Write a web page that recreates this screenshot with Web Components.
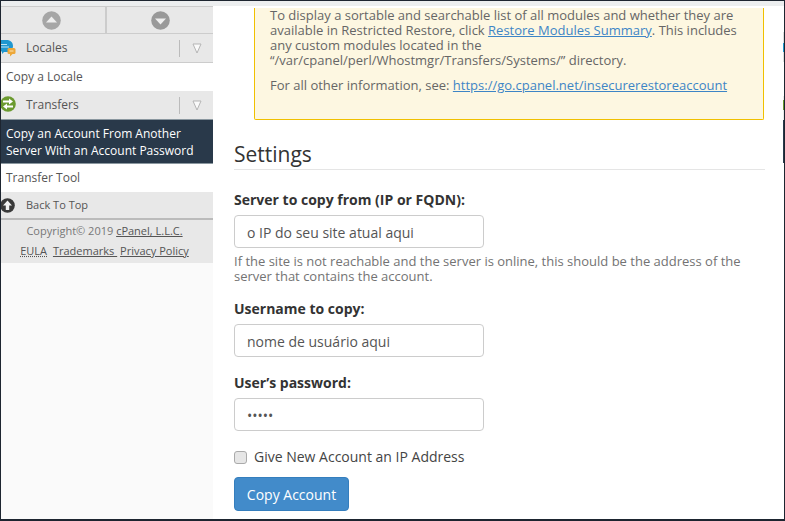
<!DOCTYPE html>
<html>
<head>
<meta charset="utf-8">
<style>
  html, body { margin: 0; padding: 0; height: 100%; overflow: hidden; background: #fff; }
  body { font-family: "Open Sans", sans-serif; }
</style>
</head>
<body>
<whm-page>
  <whm-sidebar slot="side"></whm-sidebar>
  <whm-notice>
    <p>To display a sortable and searchable list of all modules and whether they are available in Restricted Restore, click <a href="#">Restore Modules Summary</a>. This includes any custom modules located in the “/var/cpanel/perl/Whostmgr/Transfers/Systems/” directory.</p>
    <p>For all other information, see: <a href="#">https://go.cpanel.net/insecurerestoreaccount</a></p>
  </whm-notice>
  <settings-form></settings-form>
</whm-page>
<script>
class WhmPage extends HTMLElement {
  constructor () {
    super();
    this.attachShadow({mode: 'open'}).innerHTML = `
      <style>
        :host { display: flex; flex-direction: column; width: 785px; height: 521px; overflow: hidden; box-sizing: border-box; border: 1px solid #1d2530; border-width: 1px 1px 2px 1px; }
        .top { height: 5px; background: #eceeef; flex: none; }
        .body { display: flex; flex: 1; min-height: 0; }
        .side { width: 212px; flex: none; background: #fafafa; }
        .main { flex: 1; min-width: 0; padding: 0 18px 0 21px; background: #fff; }
        /* sliver of the sidebar of the window behind */
        .sliver { width: 1px; flex: none; background: linear-gradient(#fff 26px, #ddd 26px, #ddd 37px, #1f97cf 37px, #1f97cf 46px, #ddd 46px, #ddd 56px, #fff 56px, #fff 90px, #e8e8e8 90px, #e8e8e8 94px, #6b9a2f 94px, #6b9a2f 104px, #e8e8e8 104px, #e8e8e8 114px, #29394a 114px, #29394a 157px, #fff 157px); }
      </style>
      <div class="top"></div>
      <div class="body">
        <div class="side"><slot name="side"></slot></div>
        <div class="main"><slot></slot></div>
        <div class="sliver"></div>
      </div>`;
  }
}
class WhmSidebar extends HTMLElement {
  constructor () {
    super();
    this.attachShadow({mode: 'open'}).innerHTML = `
      <style>
        :host { display: block; font: 12px/18px "Open Sans", sans-serif; color: #555; }
        .arrows { display: flex; height: 26px; background: #e8e8e8; border-top: 1px solid #ccc; border-bottom: 1px solid #ccc; }
        .arrows div { display: flex; align-items: center; justify-content: center; }
        .arrows .up { width: 101px; padding-right: 3px; }
        .arrows .down { flex: 1; border-left: 2px solid #ccc; }
        .cat { display: flex; align-items: center; height: 28px; background: #e8e8e8; position: relative; }
        .cat svg.ico { position: absolute; left: -1px; top: 5px; }
        .cat span { margin-left: 25px; flex: 1; }
        .cat i { width: 1px; height: 17px; background: #bbb; }
        .cat b { width: 33px; display: flex; justify-content: center; }
        .item { padding: 5px; background: #fff; color: #555; height: 18px; }
        .item.active { height: auto; background: #29394a; color: #fff; padding: 5px 5px 4px; line-height: 17px; border-top: 1px solid #8a979f; border-bottom: 1px solid #8a979f; }
        .back { display: flex; align-items: center; height: 26px; background: #e8e8e8; font-size: 11px; position: relative; }
        .back svg { position: absolute; left: -1px; top: 6px; }
        .back span { margin-left: 25px; }
        .foot { background: #e8e8e8; border-top: 2px solid #bbb; height: 42px; padding: 1px 5px 0 0; text-align: center; font-size: 11px; line-height: 20px; color: #777; }
        .foot u { color: #555; }
        .foot u.dot { text-decoration-style: dotted; margin-right: 3px; }
      </style>
      <div class="arrows">
        <div class="up"><svg width="19" height="19" viewBox="0 0 19 19"><circle cx="9.5" cy="9.5" r="9.3" fill="#a6a6a6"/><path d="M9.5 5.5 15 11.5H4z" fill="#eee"/></svg></div>
        <div class="down"><svg width="19" height="19" viewBox="0 0 19 19"><circle cx="9.5" cy="9.5" r="9.3" fill="#999"/><path d="M4 7.5h11L9.5 13.5z" fill="#eee"/></svg></div>
      </div>
      <div class="cat" style="border-bottom:1px solid #ccc">
        <svg class="ico" width="16" height="18" viewBox="0 0 16 18"><path d="M0 1h6.500C10.500 1 13 3.500 13 7s-2.500 6-6.500 6H4l-2 2v-2.300L0 12z" fill="#1f97cf"/><path d="M1 5.500h6M1 8h8" stroke="#bfe4f4"/><rect x="7.500" y="9" width="8" height="6" rx="1.500" fill="#eda83a"/><path d="M10 15v2.500l2.500-2.500z" fill="#eda83a"/><path d="M9.500 12h4" stroke="#fbe3b4"/></svg>
        <span>Locales</span><i></i><b><svg width="10" height="11" viewBox="0 0 10 11"><path d="M1 1h8L5 10z" fill="#fafafa" stroke="#b5b5b5"/></svg></b>
      </div>
      <div class="item">Copy a Locale</div>
      <div class="cat">
        <svg class="ico" width="16" height="16" viewBox="0 0 16 16"><circle cx="8" cy="8" r="7.800" fill="#6b9a2f"/><path d="M3 4.500h6v-2l4 3-4 3v-2H3zM13 11.500H7v2l-4-3 4-3v2h6z" fill="#fff"/></svg>
        <span>Transfers</span><i></i><b><svg width="10" height="11" viewBox="0 0 10 11"><path d="M1 1h8L5 10z" fill="#fafafa" stroke="#b5b5b5"/></svg></b>
      </div>
      <div class="item active">Copy an Account From Another Server With an Account Password</div>
      <div class="item">Transfer Tool</div>
      <div class="back"><svg width="15" height="15" viewBox="0 0 15 15"><circle cx="7.500" cy="7.500" r="7.300" fill="#3a3a3a"/><path d="M7.500 2.500 12 7.500H9.200v4.500H5.800V7.500H3z" fill="#f2f2f2"/></svg><span>Back To Top</span></div>
      <div class="foot">Copyright© 2019 <u>cPanel, L.L.C.</u><br><u class="dot">EULA</u> <u>Trademarks&nbsp;</u> <u>Privacy Policy</u></div>`;
  }
}
class WhmNotice extends HTMLElement {
  constructor () {
    super();
    this.attachShadow({mode: 'open'}).innerHTML = `
      <style>
        :host { display: block; margin-left: 20px; width: 510px; box-sizing: border-box; height: 112px; background: #fdf7e1; border: 1px solid #f0c000; border-top: 0; border-radius: 0 0 2px 2px; padding: 0 15px; font: 13px/15px "Open Sans", sans-serif; color: #666; }
        ::slotted(p) { margin: 2px 0 10px; }
      </style>
      <slot></slot>`;
  }
  connectedCallback () {
    // slotted anchors live in the light dom, style them from here
    this.querySelectorAll('a').forEach(a => { a.style.color = '#3d85c6'; });
  }
}
class FormField extends HTMLElement {
  constructor () {
    super();
    this.attachShadow({mode: 'open'});
  }
  connectedCallback () {
    const type = this.getAttribute('type') || 'text';
    const help = this.getAttribute('help');
    this.shadowRoot.innerHTML = `
      <style>
        :host { display: block; font: 14px/20px "Open Sans", sans-serif; color: #333; }
        label { display: block; font-weight: 700; font-size: 14px; padding-top: 1px; margin-bottom: 5px; }
        input { display: block; width: 250px; height: 33px; box-sizing: border-box; border: 1px solid #ccc; border-radius: 4px; padding: 1px 12px 0; font: 14px "Open Sans", sans-serif; color: #555; background: #fff; outline: 0; }
        .help { margin: 6px 0 -1px; font-size: 13px; line-height: 15px; color: #737373; }
      </style>
      <label>${this.getAttribute('label')}</label>
      <input type="${type}" value="${this.getAttribute('value')}">
      ${help ? `<p class="help">${help}</p>` : ''}`;
  }
}
class SettingsForm extends HTMLElement {
  constructor () {
    super();
    this.attachShadow({mode: 'open'}).innerHTML = `
      <style>
        :host { display: block; font: 14px/20px "Open Sans", sans-serif; color: #333; }
        h2 { font-size: 21px; font-weight: 400; line-height: 28px; margin: 20px 0 19px; padding-bottom: 1px; border-bottom: 1px solid #e5e5e5; color: #333; }
        form-field { margin-bottom: 15px; }
        .check { display: flex; align-items: center; gap: 7px; margin: 16px 0 10px; color: #444; }
        .check input { appearance: none; width: 13px; height: 13px; margin: 0; box-sizing: border-box; background: #e6e6e6; border: 1px solid #aaa; border-radius: 3px; }
        button { display: block; width: 115px; height: 34px; background: #428bca; border: 1px solid #357ebd; border-radius: 4px; color: #fff; font: 14px "Open Sans", sans-serif; padding: 0; }
      </style>
      <h2>Settings</h2>
      <form-field label="Server to copy from (IP or FQDN):" value="o IP do seu site atual aqui" help="If the site is not reachable and the server is online, this should be the address of the server that contains the account."></form-field>
      <form-field label="Username to copy:" value="nome de usuário aqui"></form-field>
      <form-field label="User’s password:" type="password" value="12345"></form-field>
      <div class="check"><input type="checkbox"><span>Give New Account an IP Address</span></div>
      <button>Copy Account</button>`;
  }
}
customElements.define('whm-page', WhmPage);
customElements.define('whm-sidebar', WhmSidebar);
customElements.define('whm-notice', WhmNotice);
customElements.define('form-field', FormField);
customElements.define('settings-form', SettingsForm);
</script>
</body>
</html>
